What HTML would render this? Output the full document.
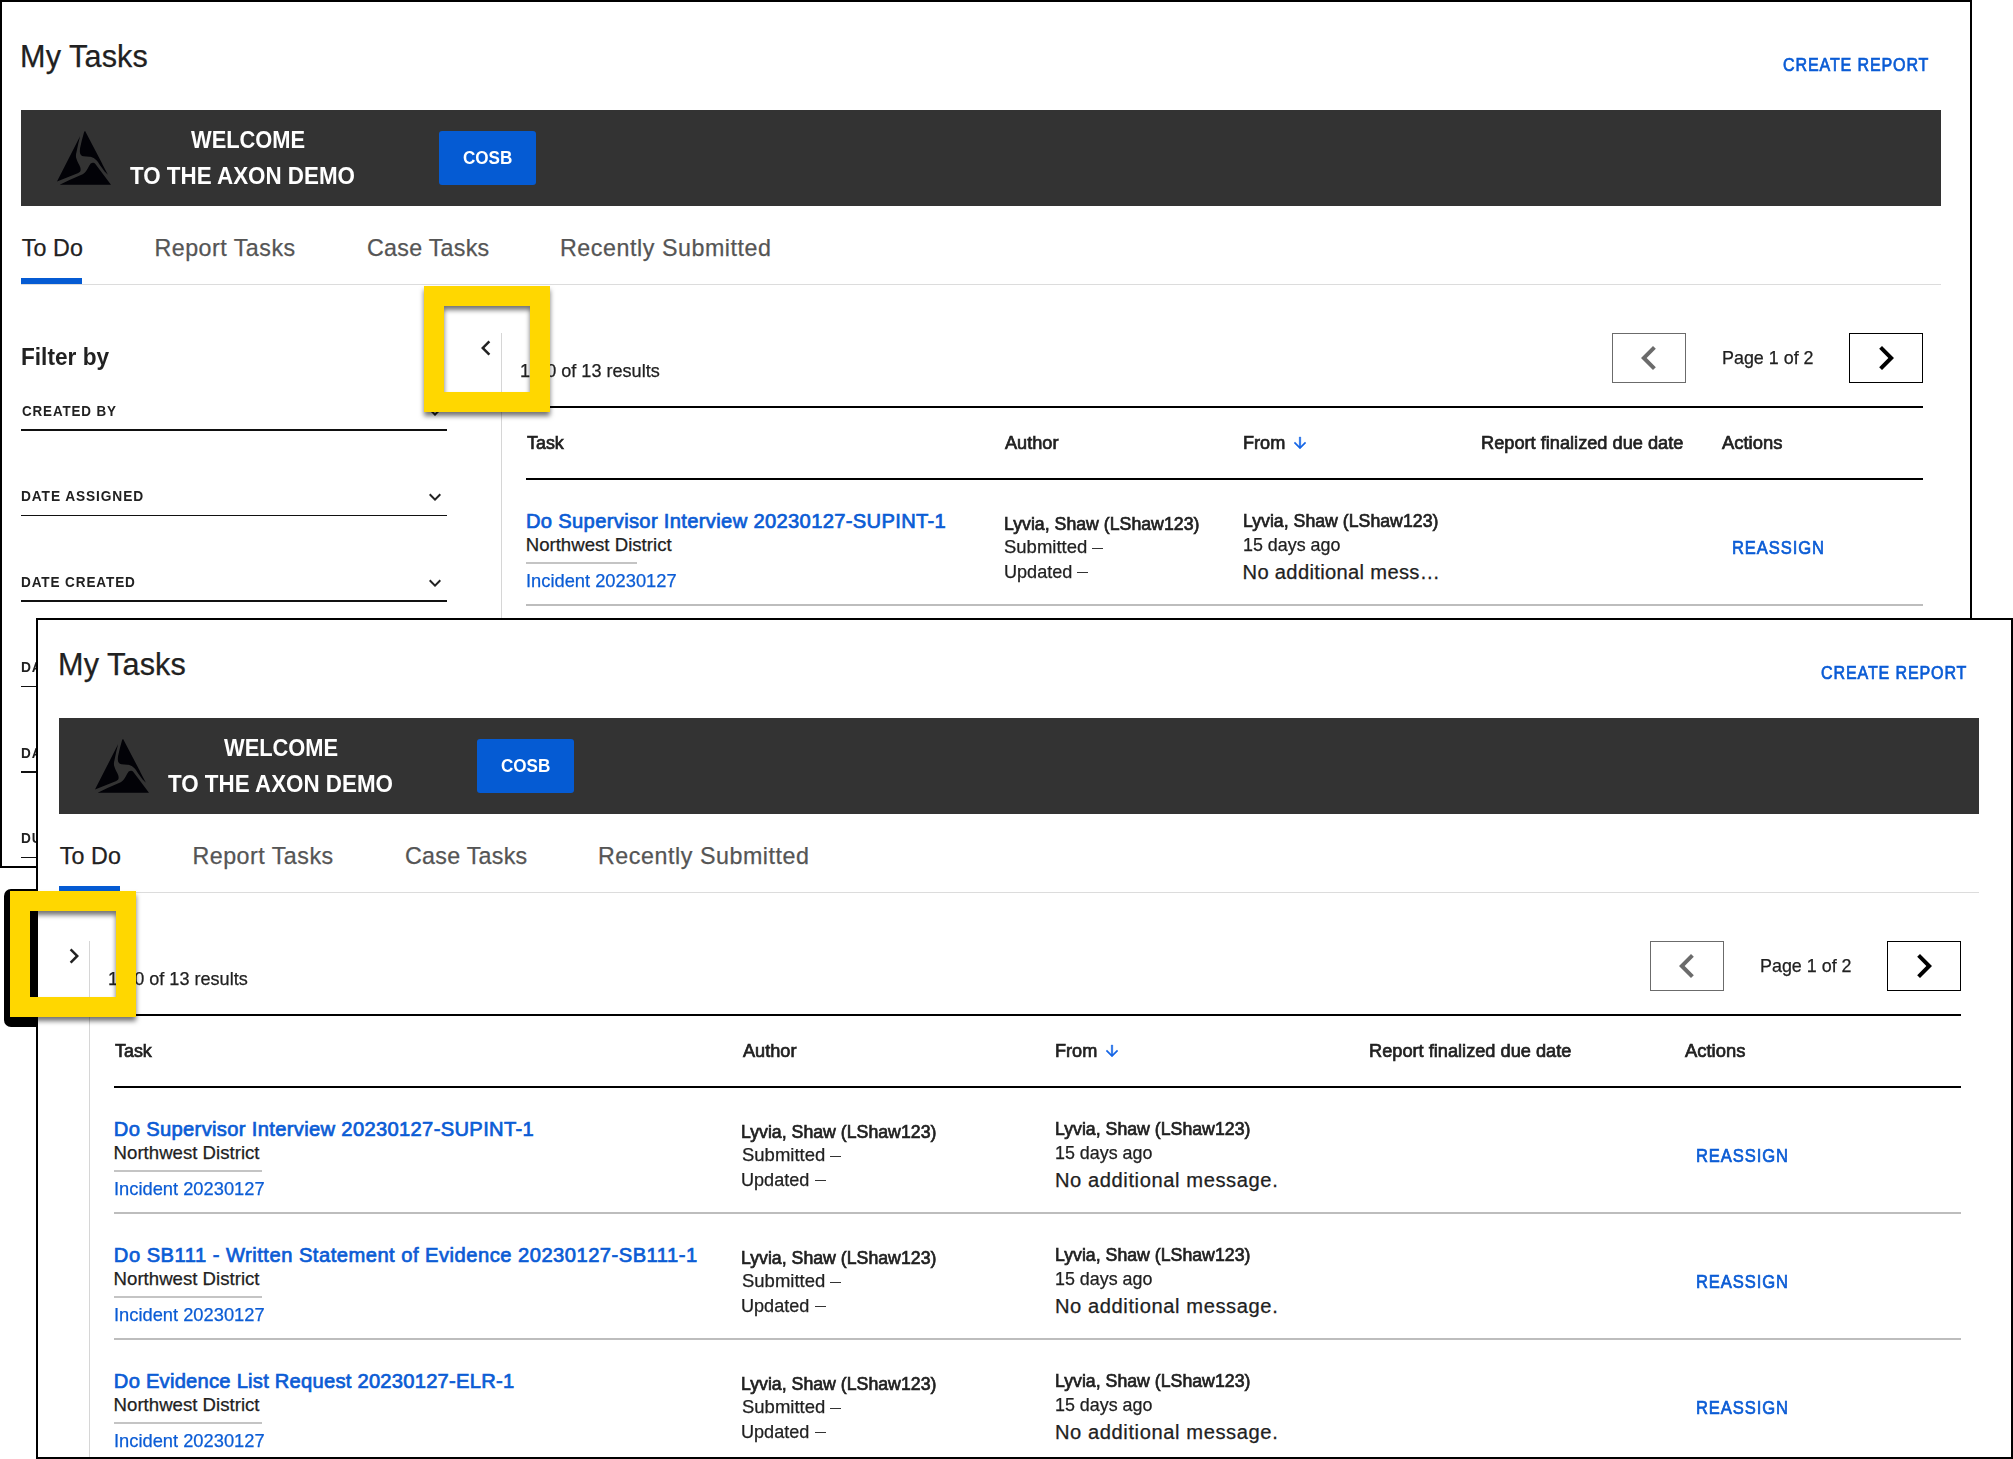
<!DOCTYPE html><html><head><meta charset="utf-8"><title>My Tasks</title><style>html,body{margin:0;padding:0;background:#fff}
body{width:2013px;height:1459px;position:relative;overflow:hidden;font-family:"Liberation Sans", sans-serif}
.scr{position:absolute;background:#fff;border:2px solid #000;box-sizing:border-box;overflow:hidden}
.scr div{line-height:1;white-space:nowrap}
.in{position:absolute}
</style></head><body>
<div class="scr" style="left:0;top:0;width:1972px;height:868px"><div class="in" style="left:-2px;top:-2px">
<div style="position:absolute;left:20.10px;top:40.79px;font-size:30.6px;color:#212121;font-weight:400;-webkit-text-stroke:0.25px #212121;letter-spacing:0.100px;">My Tasks</div>
<div style="position:absolute;left:1783.47px;top:55.89px;font-size:18.6px;color:#0b5cd5;font-weight:400;-webkit-text-stroke:0.7px #0b5cd5;transform:scaleX(0.8638);transform-origin:0 0;letter-spacing:1.0px;">CREATE REPORT</div>
<div style="position:absolute;left:21px;top:110px;width:1920px;height:96px;background:#333333;"></div>
<svg style="position:absolute;left:57px;top:131px" width="54" height="54" viewBox="0 0 54 54"><g fill="#020207"><path d="M28.1 0 L45 32.3 L45.5 33.6 L50.9 43.7 L47.6 40.6 L43.2 34.5 C41.5 32 40.5 30.5 39.7 29.6 C38.5 28.3 37.5 27.5 36.7 27 C35 26 33.5 25.8 32.3 25.7 L26.6 25.3 C24.5 25 23 23.5 22.85 20.9 C22.8 19.5 22.9 18 23.1 16.9 L24.8 9.5 L27.2 0.7 Z"/><path d="M23.07 5.3 L0 50.5 L21.3 41.9 C22.8 41.2 23.6 40.3 23.6 39 C23.7 38 23.5 37.3 23.3 36.5 C22.8 35 22 33.8 21.3 32.3 C20.6 31 20 29.5 19.6 28.3 C19.1 27 18.9 26 18.9 24.8 C18.9 23.3 19.2 22 19.6 20.4 L21.3 12.5 Z"/><path d="M2.7 53.7 L54 53.7 L38.4 32.9 C37.6 32 36.8 31.7 35.8 31.8 C34.6 31.9 33.8 32.4 33.2 33.2 C32.3 34.3 31.7 35.8 31 37.1 C30.3 38.4 29.7 39.6 28.8 40.6 C27.9 41.7 26.9 42.6 25.7 43.2 L12.5 49 Z"/></g>
</svg>
<div style="position:absolute;left:190.60px;top:128.22px;font-size:24.8px;color:#ffffff;font-weight:700;transform:scaleX(0.8817);transform-origin:0 0;">WELCOME</div>
<div style="position:absolute;left:129.67px;top:164.02px;font-size:24.8px;color:#ffffff;font-weight:700;transform:scaleX(0.9020);transform-origin:0 0;">TO THE AXON DEMO</div>
<div style="position:absolute;left:439px;top:131px;width:97px;height:54px;background:#055bd3;border-radius:3px;"></div>
<div style="position:absolute;left:463.41px;top:148.89px;font-size:18.6px;color:#ffffff;font-weight:700;transform:scaleX(0.9187);transform-origin:0 0;">COSB</div>
<div style="position:absolute;left:21.70px;top:236.94px;font-size:23.25px;color:#212121;font-weight:400;-webkit-text-stroke:0.25px #212121;letter-spacing:0.125px;">To Do</div>
<div style="position:absolute;left:154.45px;top:236.94px;font-size:23.25px;color:#555555;font-weight:400;-webkit-text-stroke:0.25px #555555;letter-spacing:0.495px;">Report Tasks</div>
<div style="position:absolute;left:367.00px;top:236.94px;font-size:23.25px;color:#555555;font-weight:400;-webkit-text-stroke:0.25px #555555;letter-spacing:0.267px;">Case Tasks</div>
<div style="position:absolute;left:559.95px;top:236.94px;font-size:23.25px;color:#555555;font-weight:400;-webkit-text-stroke:0.25px #555555;letter-spacing:0.559px;">Recently Submitted</div>
<div style="position:absolute;left:21px;top:284px;width:1920px;height:1px;background:#dcdcdc;"></div>
<div style="position:absolute;left:21px;top:278px;width:61px;height:6px;background:#055bd3;"></div>
<div style="position:absolute;left:20.60px;top:344.92px;font-size:24.8px;color:#212121;font-weight:700;transform:scaleX(0.9132);transform-origin:0 0;">Filter by</div>
<div style="position:absolute;left:21.55px;top:402.93px;font-size:15.5px;color:#212121;font-weight:700;transform:scaleX(0.8651);transform-origin:0 0;letter-spacing:1.0px;">CREATED BY</div>
<div style="position:absolute;left:21px;top:429.0px;width:426px;height:2px;background:#111;"></div>
<svg style="position:absolute;left:423px;top:399.5px" width="24" height="24" viewBox="0 0 24 24"><path fill="#222" d="M16.59 8.59L12 13.17 7.41 8.59 6 10l6 6 6-6z"/></svg>
<div style="position:absolute;left:21.31px;top:488.43px;font-size:15.5px;color:#212121;font-weight:700;transform:scaleX(0.8868);transform-origin:0 0;letter-spacing:1.0px;">DATE ASSIGNED</div>
<div style="position:absolute;left:21px;top:514.75px;width:426px;height:1.5px;background:#111;"></div>
<svg style="position:absolute;left:423px;top:485.0px" width="24" height="24" viewBox="0 0 24 24"><path fill="#222" d="M16.59 8.59L12 13.17 7.41 8.59 6 10l6 6 6-6z"/></svg>
<div style="position:absolute;left:21.32px;top:573.92px;font-size:15.5px;color:#212121;font-weight:700;transform:scaleX(0.8755);transform-origin:0 0;letter-spacing:1.0px;">DATE CREATED</div>
<div style="position:absolute;left:21px;top:600.0px;width:426px;height:2px;background:#111;"></div>
<svg style="position:absolute;left:423px;top:570.5px" width="24" height="24" viewBox="0 0 24 24"><path fill="#222" d="M16.59 8.59L12 13.17 7.41 8.59 6 10l6 6 6-6z"/></svg>
<div style="position:absolute;left:21.31px;top:659.42px;font-size:15.5px;color:#212121;font-weight:700;transform:scaleX(0.8911);transform-origin:0 0;letter-spacing:1.0px;">DATE UPDATED</div>
<div style="position:absolute;left:21px;top:685.75px;width:426px;height:1.5px;background:#111;"></div>
<svg style="position:absolute;left:423px;top:656.0px" width="24" height="24" viewBox="0 0 24 24"><path fill="#222" d="M16.59 8.59L12 13.17 7.41 8.59 6 10l6 6 6-6z"/></svg>
<div style="position:absolute;left:21.33px;top:744.92px;font-size:15.5px;color:#212121;font-weight:700;transform:scaleX(0.8741);transform-origin:0 0;letter-spacing:1.0px;">DATE SUBMITTED</div>
<div style="position:absolute;left:21px;top:771.0px;width:426px;height:2px;background:#111;"></div>
<svg style="position:absolute;left:423px;top:741.5px" width="24" height="24" viewBox="0 0 24 24"><path fill="#222" d="M16.59 8.59L12 13.17 7.41 8.59 6 10l6 6 6-6z"/></svg>
<div style="position:absolute;left:21.32px;top:830.42px;font-size:15.5px;color:#212121;font-weight:700;transform:scaleX(0.8802);transform-origin:0 0;letter-spacing:1.0px;">DUE DATE</div>
<div style="position:absolute;left:21px;top:856.75px;width:426px;height:1.5px;background:#111;"></div>
<svg style="position:absolute;left:423px;top:827.0px" width="24" height="24" viewBox="0 0 24 24"><path fill="#222" d="M16.59 8.59L12 13.17 7.41 8.59 6 10l6 6 6-6z"/></svg>
<div style="position:absolute;left:501.0px;top:333px;width:1px;height:1200px;background:#d6d6d6;"></div>
<div style="position:absolute;left:520.46px;top:362.43px;font-size:18.2px;color:#212121;font-weight:400;-webkit-text-stroke:0.25px #212121;transform:scaleX(0.9946);transform-origin:0 0;">1-10 of 13 results</div>
<div style="position:absolute;left:1612px;top:333px;width:74px;height:50px;border:1px solid #6b6b6b;box-sizing:border-box;"></div>
<svg style="position:absolute;left:1625px;top:334px" width="48" height="48" viewBox="0 0 24 24"><path fill="#6b6b6b" d="M15.41 7.41L14 6l-6 6 6 6 1.41-1.41L10.83 12z"/></svg>
<div style="position:absolute;left:1722.24px;top:349.06px;font-size:18.4px;color:#212121;font-weight:400;-webkit-text-stroke:0.25px #212121;transform:scaleX(0.9733);transform-origin:0 0;">Page 1 of 2</div>
<div style="position:absolute;left:1849px;top:333px;width:74px;height:50px;border:1px solid #000;box-sizing:border-box;"></div>
<svg style="position:absolute;left:1862px;top:334px" width="48" height="48" viewBox="0 0 24 24"><path fill="#000" d="M10 6L8.59 7.41 13.17 12l-4.58 4.59L10 18l6-6z"/></svg>
<div style="position:absolute;left:526.0px;top:406px;width:1397.0px;height:2px;background:#000;"></div>
<div style="position:absolute;left:526.0px;top:477.5px;width:1397.0px;height:2px;background:#000;"></div>
<div style="position:absolute;left:527.20px;top:433.79px;font-size:18.6px;color:#212121;font-weight:400;-webkit-text-stroke:0.7px #212121;transform:scaleX(0.9626);transform-origin:0 0;">Task</div>
<div style="position:absolute;left:1005.29px;top:433.79px;font-size:18.6px;color:#212121;font-weight:400;-webkit-text-stroke:0.7px #212121;transform:scaleX(0.9756);transform-origin:0 0;">Author</div>
<div style="position:absolute;left:1242.78px;top:433.79px;font-size:18.6px;color:#212121;font-weight:400;-webkit-text-stroke:0.7px #212121;transform:scaleX(0.9745);transform-origin:0 0;">From</div>
<svg style="position:absolute;left:1290.8999999999999px;top:433.9px" width="18" height="18" viewBox="0 0 24 24"><path fill="#1465e6" stroke="#1465e6" stroke-width="0.5" d="M20 12l-1.41-1.41L13 16.17V4h-2v12.17l-5.58-5.59L4 12l8 8 8-8z"/></svg>
<div style="position:absolute;left:1481.08px;top:433.79px;font-size:18.6px;color:#212121;font-weight:400;-webkit-text-stroke:0.7px #212121;transform:scaleX(0.9790);transform-origin:0 0;">Report finalized due date</div>
<div style="position:absolute;left:1721.79px;top:433.79px;font-size:18.6px;color:#212121;font-weight:400;-webkit-text-stroke:0.7px #212121;transform:scaleX(0.9894);transform-origin:0 0;">Actions</div>
<div style="position:absolute;left:525.95px;top:511.47px;font-size:20.15px;color:#0b5cd5;font-weight:400;-webkit-text-stroke:0.7px #0b5cd5;letter-spacing:0.338px;">Do Supervisor Interview 20230127-SUPINT-1</div>
<div style="position:absolute;left:525.70px;top:535.99px;font-size:18.6px;color:#212121;font-weight:400;-webkit-text-stroke:0.25px #212121;letter-spacing:0.015px;">Northwest District</div>
<div style="position:absolute;left:526.0px;top:562px;width:110.5px;height:2px;background:#c4c4c4;"></div>
<div style="position:absolute;left:525.72px;top:571.59px;font-size:18.6px;color:#0b5cd5;font-weight:400;-webkit-text-stroke:0.25px #0b5cd5;transform:scaleX(0.9844);transform-origin:0 0;">Incident 20230127</div>
<div style="position:absolute;left:1003.61px;top:514.69px;font-size:18.6px;color:#212121;font-weight:400;-webkit-text-stroke:0.7px #212121;transform:scaleX(0.9532);transform-origin:0 0;">Lyvia, Shaw (LShaw123)</div>
<div style="position:absolute;left:1004.05px;top:538.49px;font-size:18.6px;color:#212121;font-weight:400;-webkit-text-stroke:0.25px #212121;transform:scaleX(0.9939);transform-origin:0 0;">Submitted</div>
<div style="position:absolute;left:1091.8px;top:547.6px;width:11.6px;height:1.4px;background:#333;"></div>
<div style="position:absolute;left:1003.58px;top:562.59px;font-size:18.6px;color:#212121;font-weight:400;-webkit-text-stroke:0.25px #212121;transform:scaleX(0.9721);transform-origin:0 0;">Updated</div>
<div style="position:absolute;left:1077.4px;top:571.6px;width:11.1px;height:1.4px;background:#333;"></div>
<div style="position:absolute;left:1242.81px;top:512.19px;font-size:18.6px;color:#212121;font-weight:400;-webkit-text-stroke:0.7px #212121;transform:scaleX(0.9532);transform-origin:0 0;">Lyvia, Shaw (LShaw123)</div>
<div style="position:absolute;left:1242.80px;top:535.79px;font-size:18.6px;color:#212121;font-weight:400;-webkit-text-stroke:0.25px #212121;transform:scaleX(0.9608);transform-origin:0 0;">15 days ago</div>
<div style="position:absolute;left:1242.50px;top:562.37px;font-size:20.15px;color:#212121;font-weight:400;-webkit-text-stroke:0.25px #212121;letter-spacing:0.331px;">No additional mess…</div>
<div style="position:absolute;left:1732.39px;top:539.29px;font-size:18.6px;color:#0b5cd5;font-weight:400;-webkit-text-stroke:0.7px #0b5cd5;transform:scaleX(0.8913);transform-origin:0 0;letter-spacing:1.0px;">REASSIGN</div>
<div style="position:absolute;left:526.0px;top:604px;width:1397.0px;height:2px;background:#bdbdbd;"></div>
<svg style="position:absolute;left:471px;top:333.2px" width="30" height="30" viewBox="0 0 24 24"><path fill="#222" d="M15.41 7.41L14 6l-6 6 6 6 1.41-1.41L10.83 12z"/></svg>
</div></div>
<div style="position:absolute;left:4px;top:889px;width:40px;height:138px;background:#000;border-radius:7px"></div>
<div class="scr" style="left:36px;top:618px;width:1977px;height:841px"><div class="in" style="left:0px;top:-12px">
<div style="position:absolute;left:20.10px;top:40.79px;font-size:30.6px;color:#212121;font-weight:400;-webkit-text-stroke:0.25px #212121;letter-spacing:0.100px;">My Tasks</div>
<div style="position:absolute;left:1783.47px;top:55.89px;font-size:18.6px;color:#0b5cd5;font-weight:400;-webkit-text-stroke:0.7px #0b5cd5;transform:scaleX(0.8638);transform-origin:0 0;letter-spacing:1.0px;">CREATE REPORT</div>
<div style="position:absolute;left:21px;top:110px;width:1920px;height:96px;background:#333333;"></div>
<svg style="position:absolute;left:57px;top:131px" width="54" height="54" viewBox="0 0 54 54"><g fill="#020207"><path d="M28.1 0 L45 32.3 L45.5 33.6 L50.9 43.7 L47.6 40.6 L43.2 34.5 C41.5 32 40.5 30.5 39.7 29.6 C38.5 28.3 37.5 27.5 36.7 27 C35 26 33.5 25.8 32.3 25.7 L26.6 25.3 C24.5 25 23 23.5 22.85 20.9 C22.8 19.5 22.9 18 23.1 16.9 L24.8 9.5 L27.2 0.7 Z"/><path d="M23.07 5.3 L0 50.5 L21.3 41.9 C22.8 41.2 23.6 40.3 23.6 39 C23.7 38 23.5 37.3 23.3 36.5 C22.8 35 22 33.8 21.3 32.3 C20.6 31 20 29.5 19.6 28.3 C19.1 27 18.9 26 18.9 24.8 C18.9 23.3 19.2 22 19.6 20.4 L21.3 12.5 Z"/><path d="M2.7 53.7 L54 53.7 L38.4 32.9 C37.6 32 36.8 31.7 35.8 31.8 C34.6 31.9 33.8 32.4 33.2 33.2 C32.3 34.3 31.7 35.8 31 37.1 C30.3 38.4 29.7 39.6 28.8 40.6 C27.9 41.7 26.9 42.6 25.7 43.2 L12.5 49 Z"/></g>
</svg>
<div style="position:absolute;left:185.60px;top:128.22px;font-size:24.8px;color:#ffffff;font-weight:700;transform:scaleX(0.8817);transform-origin:0 0;">WELCOME</div>
<div style="position:absolute;left:129.67px;top:164.02px;font-size:24.8px;color:#ffffff;font-weight:700;transform:scaleX(0.9020);transform-origin:0 0;">TO THE AXON DEMO</div>
<div style="position:absolute;left:439px;top:131px;width:97px;height:54px;background:#055bd3;border-radius:3px;"></div>
<div style="position:absolute;left:463.41px;top:148.89px;font-size:18.6px;color:#ffffff;font-weight:700;transform:scaleX(0.9187);transform-origin:0 0;">COSB</div>
<div style="position:absolute;left:21.70px;top:236.94px;font-size:23.25px;color:#212121;font-weight:400;-webkit-text-stroke:0.25px #212121;letter-spacing:0.125px;">To Do</div>
<div style="position:absolute;left:154.45px;top:236.94px;font-size:23.25px;color:#555555;font-weight:400;-webkit-text-stroke:0.25px #555555;letter-spacing:0.495px;">Report Tasks</div>
<div style="position:absolute;left:367.00px;top:236.94px;font-size:23.25px;color:#555555;font-weight:400;-webkit-text-stroke:0.25px #555555;letter-spacing:0.267px;">Case Tasks</div>
<div style="position:absolute;left:559.95px;top:236.94px;font-size:23.25px;color:#555555;font-weight:400;-webkit-text-stroke:0.25px #555555;letter-spacing:0.559px;">Recently Submitted</div>
<div style="position:absolute;left:21px;top:284px;width:1920px;height:1px;background:#dcdcdc;"></div>
<div style="position:absolute;left:21px;top:278px;width:61px;height:6px;background:#055bd3;"></div>
<div style="position:absolute;left:51.0px;top:333px;width:1px;height:1200px;background:#d6d6d6;"></div>
<div style="position:absolute;left:70.46px;top:362.43px;font-size:18.2px;color:#212121;font-weight:400;-webkit-text-stroke:0.25px #212121;transform:scaleX(0.9946);transform-origin:0 0;">1-10 of 13 results</div>
<div style="position:absolute;left:1612px;top:333px;width:74px;height:50px;border:1px solid #6b6b6b;box-sizing:border-box;"></div>
<svg style="position:absolute;left:1625px;top:334px" width="48" height="48" viewBox="0 0 24 24"><path fill="#6b6b6b" d="M15.41 7.41L14 6l-6 6 6 6 1.41-1.41L10.83 12z"/></svg>
<div style="position:absolute;left:1722.24px;top:349.06px;font-size:18.4px;color:#212121;font-weight:400;-webkit-text-stroke:0.25px #212121;transform:scaleX(0.9733);transform-origin:0 0;">Page 1 of 2</div>
<div style="position:absolute;left:1849px;top:333px;width:74px;height:50px;border:1px solid #000;box-sizing:border-box;"></div>
<svg style="position:absolute;left:1862px;top:334px" width="48" height="48" viewBox="0 0 24 24"><path fill="#000" d="M10 6L8.59 7.41 13.17 12l-4.58 4.59L10 18l6-6z"/></svg>
<div style="position:absolute;left:76.0px;top:406px;width:1847.0px;height:2px;background:#000;"></div>
<div style="position:absolute;left:76.0px;top:477.5px;width:1847.0px;height:2px;background:#000;"></div>
<div style="position:absolute;left:77.10px;top:433.79px;font-size:18.6px;color:#212121;font-weight:400;-webkit-text-stroke:0.7px #212121;transform:scaleX(0.9626);transform-origin:0 0;">Task</div>
<div style="position:absolute;left:705.09px;top:433.79px;font-size:18.6px;color:#212121;font-weight:400;-webkit-text-stroke:0.7px #212121;transform:scaleX(0.9756);transform-origin:0 0;">Author</div>
<div style="position:absolute;left:1017.18px;top:433.79px;font-size:18.6px;color:#212121;font-weight:400;-webkit-text-stroke:0.7px #212121;transform:scaleX(0.9745);transform-origin:0 0;">From</div>
<svg style="position:absolute;left:1065.3px;top:433.9px" width="18" height="18" viewBox="0 0 24 24"><path fill="#1465e6" stroke="#1465e6" stroke-width="0.5" d="M20 12l-1.41-1.41L13 16.17V4h-2v12.17l-5.58-5.59L4 12l8 8 8-8z"/></svg>
<div style="position:absolute;left:1331.18px;top:433.79px;font-size:18.6px;color:#212121;font-weight:400;-webkit-text-stroke:0.7px #212121;transform:scaleX(0.9790);transform-origin:0 0;">Report finalized due date</div>
<div style="position:absolute;left:1646.79px;top:433.79px;font-size:18.6px;color:#212121;font-weight:400;-webkit-text-stroke:0.7px #212121;transform:scaleX(0.9894);transform-origin:0 0;">Actions</div>
<div style="position:absolute;left:75.85px;top:511.47px;font-size:20.15px;color:#0b5cd5;font-weight:400;-webkit-text-stroke:0.7px #0b5cd5;letter-spacing:0.338px;">Do Supervisor Interview 20230127-SUPINT-1</div>
<div style="position:absolute;left:75.60px;top:535.99px;font-size:18.6px;color:#212121;font-weight:400;-webkit-text-stroke:0.25px #212121;letter-spacing:0.015px;">Northwest District</div>
<div style="position:absolute;left:75.9px;top:562px;width:148.5px;height:2px;background:#c4c4c4;"></div>
<div style="position:absolute;left:75.62px;top:571.59px;font-size:18.6px;color:#0b5cd5;font-weight:400;-webkit-text-stroke:0.25px #0b5cd5;transform:scaleX(0.9844);transform-origin:0 0;">Incident 20230127</div>
<div style="position:absolute;left:703.41px;top:514.69px;font-size:18.6px;color:#212121;font-weight:400;-webkit-text-stroke:0.7px #212121;transform:scaleX(0.9532);transform-origin:0 0;">Lyvia, Shaw (LShaw123)</div>
<div style="position:absolute;left:703.85px;top:538.49px;font-size:18.6px;color:#212121;font-weight:400;-webkit-text-stroke:0.25px #212121;transform:scaleX(0.9939);transform-origin:0 0;">Submitted</div>
<div style="position:absolute;left:791.6px;top:547.6px;width:11.6px;height:1.4px;background:#333;"></div>
<div style="position:absolute;left:703.38px;top:562.59px;font-size:18.6px;color:#212121;font-weight:400;-webkit-text-stroke:0.25px #212121;transform:scaleX(0.9721);transform-origin:0 0;">Updated</div>
<div style="position:absolute;left:777.1999999999999px;top:571.6px;width:11.1px;height:1.4px;background:#333;"></div>
<div style="position:absolute;left:1017.21px;top:512.19px;font-size:18.6px;color:#212121;font-weight:400;-webkit-text-stroke:0.7px #212121;transform:scaleX(0.9532);transform-origin:0 0;">Lyvia, Shaw (LShaw123)</div>
<div style="position:absolute;left:1017.20px;top:535.79px;font-size:18.6px;color:#212121;font-weight:400;-webkit-text-stroke:0.25px #212121;transform:scaleX(0.9608);transform-origin:0 0;">15 days ago</div>
<div style="position:absolute;left:1016.90px;top:562.37px;font-size:20.15px;color:#212121;font-weight:400;-webkit-text-stroke:0.25px #212121;letter-spacing:0.588px;">No additional message.</div>
<div style="position:absolute;left:1657.59px;top:539.29px;font-size:18.6px;color:#0b5cd5;font-weight:400;-webkit-text-stroke:0.7px #0b5cd5;transform:scaleX(0.8913);transform-origin:0 0;letter-spacing:1.0px;">REASSIGN</div>
<div style="position:absolute;left:76.0px;top:604px;width:1847.0px;height:2px;background:#bdbdbd;"></div>
<div style="position:absolute;left:75.85px;top:637.47px;font-size:20.15px;color:#0b5cd5;font-weight:400;-webkit-text-stroke:0.7px #0b5cd5;letter-spacing:0.492px;">Do SB111 - Written Statement of Evidence 20230127-SB111-1</div>
<div style="position:absolute;left:75.60px;top:661.99px;font-size:18.6px;color:#212121;font-weight:400;-webkit-text-stroke:0.25px #212121;letter-spacing:0.015px;">Northwest District</div>
<div style="position:absolute;left:75.9px;top:688px;width:148.5px;height:2px;background:#c4c4c4;"></div>
<div style="position:absolute;left:75.62px;top:697.59px;font-size:18.6px;color:#0b5cd5;font-weight:400;-webkit-text-stroke:0.25px #0b5cd5;transform:scaleX(0.9844);transform-origin:0 0;">Incident 20230127</div>
<div style="position:absolute;left:703.41px;top:640.69px;font-size:18.6px;color:#212121;font-weight:400;-webkit-text-stroke:0.7px #212121;transform:scaleX(0.9532);transform-origin:0 0;">Lyvia, Shaw (LShaw123)</div>
<div style="position:absolute;left:703.85px;top:664.49px;font-size:18.6px;color:#212121;font-weight:400;-webkit-text-stroke:0.25px #212121;transform:scaleX(0.9939);transform-origin:0 0;">Submitted</div>
<div style="position:absolute;left:791.6px;top:673.6px;width:11.6px;height:1.4px;background:#333;"></div>
<div style="position:absolute;left:703.38px;top:688.59px;font-size:18.6px;color:#212121;font-weight:400;-webkit-text-stroke:0.25px #212121;transform:scaleX(0.9721);transform-origin:0 0;">Updated</div>
<div style="position:absolute;left:777.1999999999999px;top:697.6px;width:11.1px;height:1.4px;background:#333;"></div>
<div style="position:absolute;left:1017.21px;top:638.19px;font-size:18.6px;color:#212121;font-weight:400;-webkit-text-stroke:0.7px #212121;transform:scaleX(0.9532);transform-origin:0 0;">Lyvia, Shaw (LShaw123)</div>
<div style="position:absolute;left:1017.20px;top:661.79px;font-size:18.6px;color:#212121;font-weight:400;-webkit-text-stroke:0.25px #212121;transform:scaleX(0.9608);transform-origin:0 0;">15 days ago</div>
<div style="position:absolute;left:1016.90px;top:688.37px;font-size:20.15px;color:#212121;font-weight:400;-webkit-text-stroke:0.25px #212121;letter-spacing:0.588px;">No additional message.</div>
<div style="position:absolute;left:1657.59px;top:665.29px;font-size:18.6px;color:#0b5cd5;font-weight:400;-webkit-text-stroke:0.7px #0b5cd5;transform:scaleX(0.8913);transform-origin:0 0;letter-spacing:1.0px;">REASSIGN</div>
<div style="position:absolute;left:76.0px;top:730px;width:1847.0px;height:2px;background:#bdbdbd;"></div>
<div style="position:absolute;left:75.85px;top:763.47px;font-size:20.15px;color:#0b5cd5;font-weight:400;-webkit-text-stroke:0.7px #0b5cd5;letter-spacing:0.250px;">Do Evidence List Request 20230127-ELR-1</div>
<div style="position:absolute;left:75.60px;top:787.99px;font-size:18.6px;color:#212121;font-weight:400;-webkit-text-stroke:0.25px #212121;letter-spacing:0.015px;">Northwest District</div>
<div style="position:absolute;left:75.9px;top:814px;width:148.5px;height:2px;background:#c4c4c4;"></div>
<div style="position:absolute;left:75.62px;top:823.59px;font-size:18.6px;color:#0b5cd5;font-weight:400;-webkit-text-stroke:0.25px #0b5cd5;transform:scaleX(0.9844);transform-origin:0 0;">Incident 20230127</div>
<div style="position:absolute;left:703.41px;top:766.69px;font-size:18.6px;color:#212121;font-weight:400;-webkit-text-stroke:0.7px #212121;transform:scaleX(0.9532);transform-origin:0 0;">Lyvia, Shaw (LShaw123)</div>
<div style="position:absolute;left:703.85px;top:790.49px;font-size:18.6px;color:#212121;font-weight:400;-webkit-text-stroke:0.25px #212121;transform:scaleX(0.9939);transform-origin:0 0;">Submitted</div>
<div style="position:absolute;left:791.6px;top:799.6px;width:11.6px;height:1.4px;background:#333;"></div>
<div style="position:absolute;left:703.38px;top:814.59px;font-size:18.6px;color:#212121;font-weight:400;-webkit-text-stroke:0.25px #212121;transform:scaleX(0.9721);transform-origin:0 0;">Updated</div>
<div style="position:absolute;left:777.1999999999999px;top:823.6px;width:11.1px;height:1.4px;background:#333;"></div>
<div style="position:absolute;left:1017.21px;top:764.19px;font-size:18.6px;color:#212121;font-weight:400;-webkit-text-stroke:0.7px #212121;transform:scaleX(0.9532);transform-origin:0 0;">Lyvia, Shaw (LShaw123)</div>
<div style="position:absolute;left:1017.20px;top:787.79px;font-size:18.6px;color:#212121;font-weight:400;-webkit-text-stroke:0.25px #212121;transform:scaleX(0.9608);transform-origin:0 0;">15 days ago</div>
<div style="position:absolute;left:1016.90px;top:814.37px;font-size:20.15px;color:#212121;font-weight:400;-webkit-text-stroke:0.25px #212121;letter-spacing:0.588px;">No additional message.</div>
<div style="position:absolute;left:1657.59px;top:791.29px;font-size:18.6px;color:#0b5cd5;font-weight:400;-webkit-text-stroke:0.7px #0b5cd5;transform:scaleX(0.8913);transform-origin:0 0;letter-spacing:1.0px;">REASSIGN</div>
<div style="position:absolute;left:76.0px;top:856px;width:1847.0px;height:2px;background:#bdbdbd;"></div>
<div style="position:absolute;left:75.87px;top:889.47px;font-size:20.15px;color:#0b5cd5;font-weight:400;-webkit-text-stroke:0.7px #0b5cd5;transform:scaleX(0.9877);transform-origin:0 0;">Do Something Else 20230127-X-1</div>
<div style="position:absolute;left:75.60px;top:913.99px;font-size:18.6px;color:#212121;font-weight:400;-webkit-text-stroke:0.25px #212121;letter-spacing:0.015px;">Northwest District</div>
<div style="position:absolute;left:75.9px;top:940px;width:148.5px;height:2px;background:#c4c4c4;"></div>
<div style="position:absolute;left:75.62px;top:949.59px;font-size:18.6px;color:#0b5cd5;font-weight:400;-webkit-text-stroke:0.25px #0b5cd5;transform:scaleX(0.9844);transform-origin:0 0;">Incident 20230127</div>
<div style="position:absolute;left:703.41px;top:892.69px;font-size:18.6px;color:#212121;font-weight:400;-webkit-text-stroke:0.7px #212121;transform:scaleX(0.9532);transform-origin:0 0;">Lyvia, Shaw (LShaw123)</div>
<div style="position:absolute;left:703.85px;top:916.49px;font-size:18.6px;color:#212121;font-weight:400;-webkit-text-stroke:0.25px #212121;transform:scaleX(0.9939);transform-origin:0 0;">Submitted</div>
<div style="position:absolute;left:791.6px;top:925.6px;width:11.6px;height:1.4px;background:#333;"></div>
<div style="position:absolute;left:703.38px;top:940.59px;font-size:18.6px;color:#212121;font-weight:400;-webkit-text-stroke:0.25px #212121;transform:scaleX(0.9721);transform-origin:0 0;">Updated</div>
<div style="position:absolute;left:777.1999999999999px;top:949.6px;width:11.1px;height:1.4px;background:#333;"></div>
<div style="position:absolute;left:1017.21px;top:890.19px;font-size:18.6px;color:#212121;font-weight:400;-webkit-text-stroke:0.7px #212121;transform:scaleX(0.9532);transform-origin:0 0;">Lyvia, Shaw (LShaw123)</div>
<div style="position:absolute;left:1017.20px;top:913.79px;font-size:18.6px;color:#212121;font-weight:400;-webkit-text-stroke:0.25px #212121;transform:scaleX(0.9608);transform-origin:0 0;">15 days ago</div>
<div style="position:absolute;left:1016.90px;top:940.37px;font-size:20.15px;color:#212121;font-weight:400;-webkit-text-stroke:0.25px #212121;letter-spacing:0.588px;">No additional message.</div>
<div style="position:absolute;left:1657.59px;top:917.29px;font-size:18.6px;color:#0b5cd5;font-weight:400;-webkit-text-stroke:0.7px #0b5cd5;transform:scaleX(0.8913);transform-origin:0 0;letter-spacing:1.0px;">REASSIGN</div>
<div style="position:absolute;left:76.0px;top:982px;width:1847.0px;height:2px;background:#bdbdbd;"></div>
<svg style="position:absolute;left:20.8px;top:333.2px" width="30" height="30" viewBox="0 0 24 24"><path fill="#222" d="M10 6L8.59 7.41 13.17 12l-4.58 4.59L10 18l6-6z"/></svg>
</div></div>
<div style="position:absolute;left:424px;top:286px;width:126px;height:126px;box-sizing:border-box;border:20px solid #ffd700;filter:drop-shadow(0 4px 2.5px rgba(0,0,0,0.55));"></div>
<div style="position:absolute;left:30px;top:911px;width:6px;height:86px;background:#000"></div>
<div style="position:absolute;left:10px;top:891px;width:126px;height:126px;box-sizing:border-box;border:20px solid #ffd700;filter:drop-shadow(0 4px 2.5px rgba(0,0,0,0.55));"></div>
</body></html>
